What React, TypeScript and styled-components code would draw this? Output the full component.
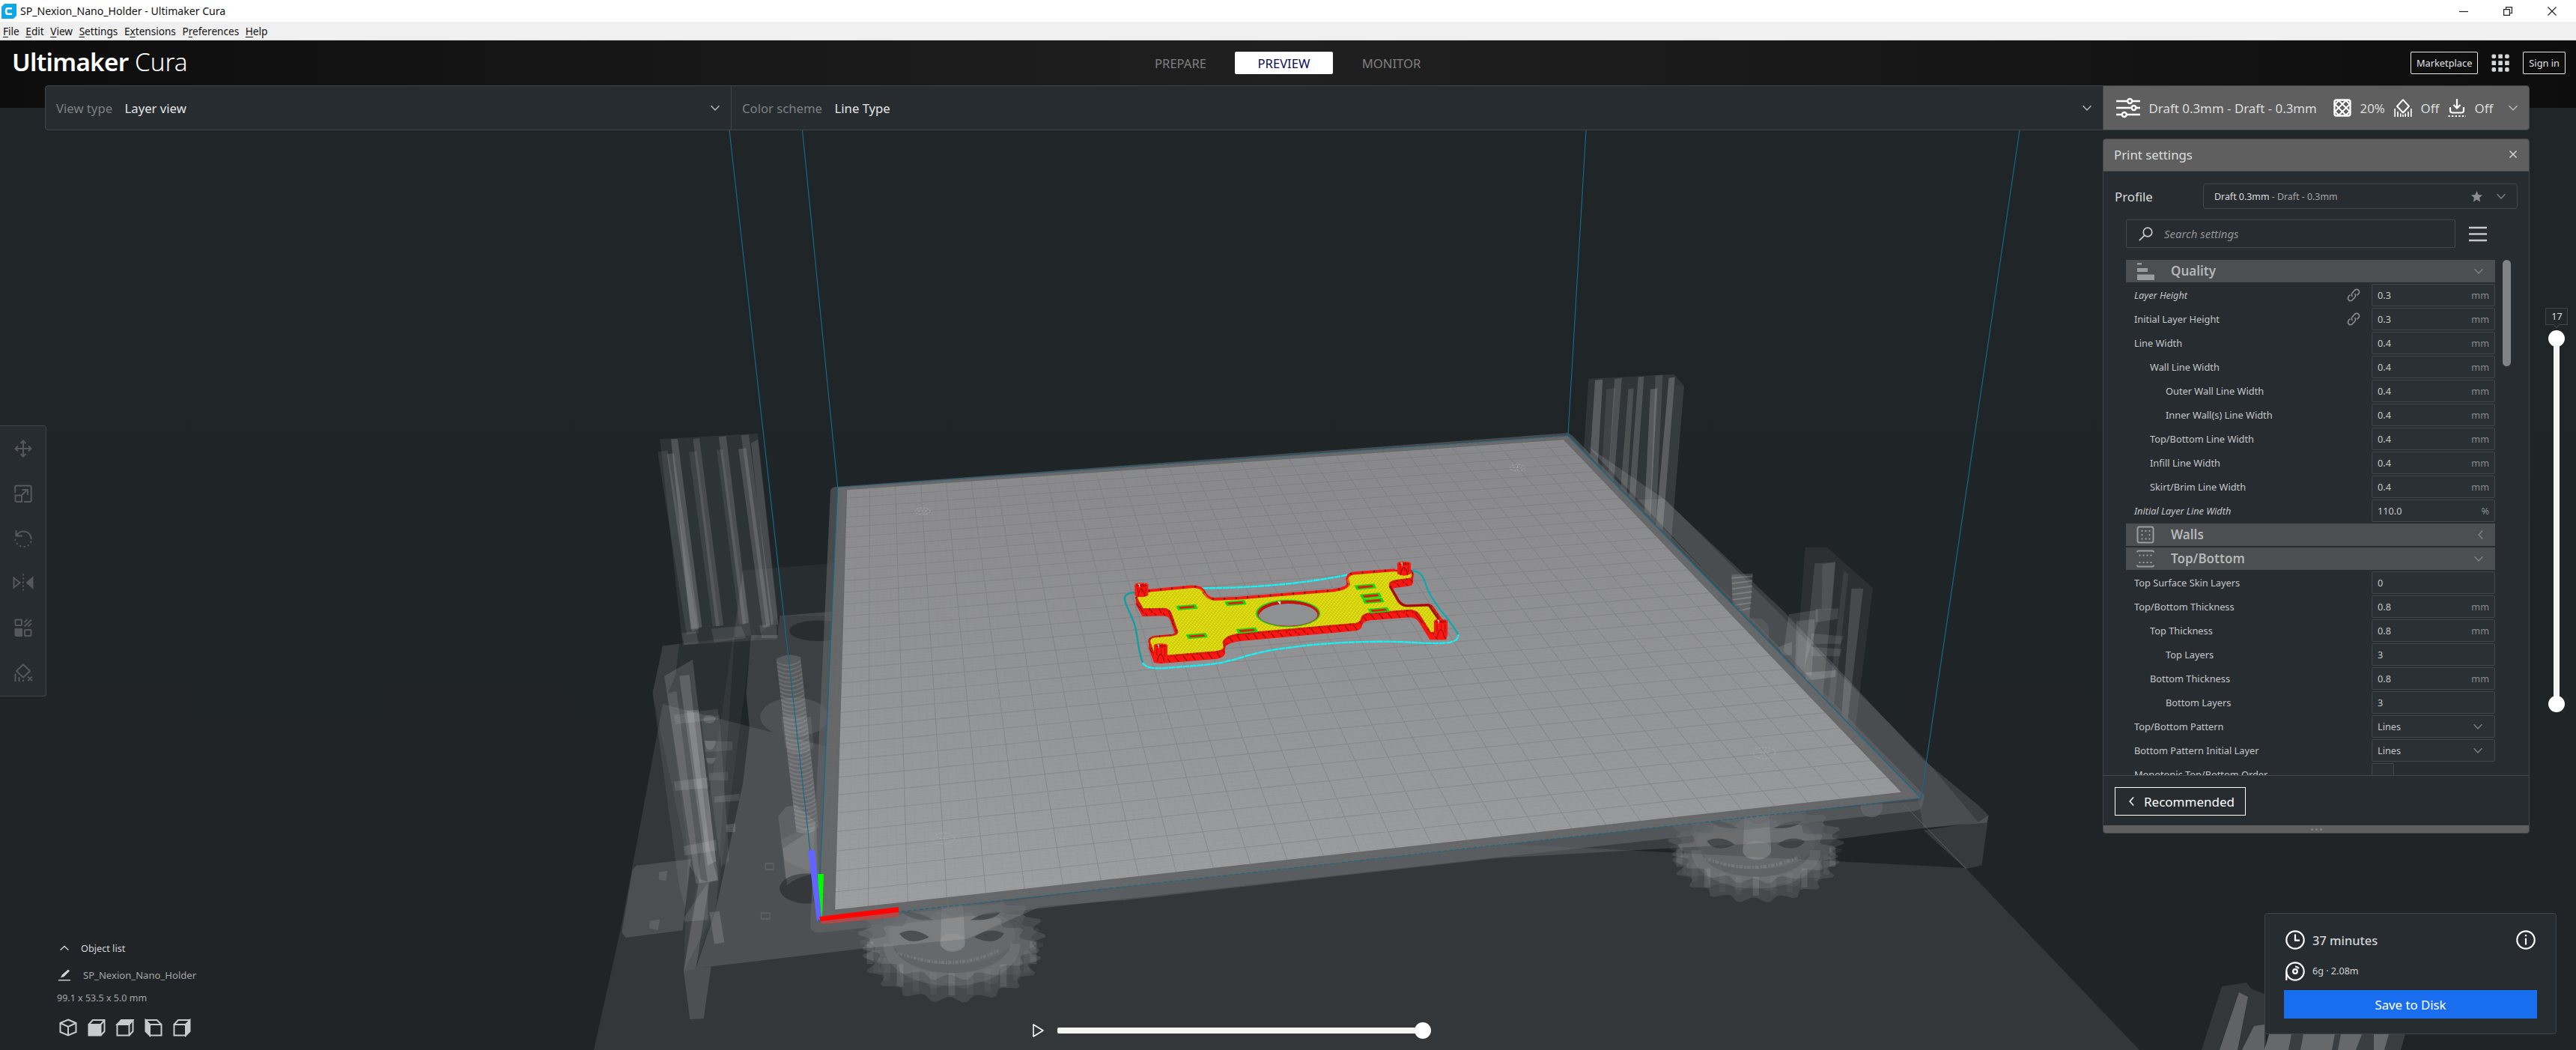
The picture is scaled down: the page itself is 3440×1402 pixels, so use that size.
import React from "react";
import styled, { createGlobalStyle, css } from "styled-components";

const GlobalStyle = createGlobalStyle`
  * { box-sizing: border-box; }
  html, body { margin: 0; padding: 0; overflow: hidden; background: #1f2427; }
  body { font-family: "Noto Sans", "Open Sans", sans-serif; color: #d6d8d9; }
`;

/* ---------- window chrome ---------- */

const Window = styled.div`
  width: 3440px;
  height: 1402px;
  display: flex;
  flex-direction: column;
  position: relative;
  isolation: isolate;
  overflow: hidden;
`;

const TitleBar = styled.div`
  height: 29px;
  flex: none;
  background: #fff;
  color: #111;
  display: flex;
  align-items: center;
  padding-left: 2px;
  font-size: 14.1px;
`;

const TitleText = styled.span`
  margin-left: 5px;
  flex: 1;
`;

const WindowButtons = styled.div`
  display: flex;
  width: 178px;
  margin-right: 2px;
  justify-content: space-around;
  align-items: center;
`;

const MenuBar = styled.div`
  height: 25px;
  flex: none;
  background: #f0f0f0;
  border-bottom: 1px solid #d4d4d4;
  color: #111;
  display: flex;
  align-items: center;
  gap: 8.6px;
  padding-left: 4px;
  font-size: 13.6px;

  u { text-underline-offset: 2px; }
`;

const Header = styled.header`
  height: 90px;
  flex: none;
  padding-bottom: 30px;
  display: grid;
  grid-template-columns: 1fr auto 1fr;
  align-items: center;
  background: linear-gradient(90deg, #0d0d0d 0%, #202020 50%, #0d0d0d 100%);
`;

const Logo = styled.div`
  padding-left: 16px;
  font-size: 33.2px;
  line-height: 40px;
  font-weight: 300;
  color: #fff;
  margin-top: -2px;

  b { font-weight: 600; letter-spacing: -0.7px; }
`;

const Tabs = styled.nav`
  display: flex;
  gap: 7px;
`;

const Tab = styled.div<{ $width: number; $active?: boolean }>`
  height: 30px;
  width: ${(p) => p.$width}px;
  display: flex;
  align-items: center;
  justify-content: center;
  font-size: 16.6px;
  border-radius: 2px;
  color: ${(p) => (p.$active ? "#0c0c54" : "#808080")};
  background: ${(p) => (p.$active ? "#fff" : "transparent")};
`;

const Account = styled.div`
  justify-self: end;
  display: flex;
  align-items: center;
  gap: 18px;
  padding-right: 14px;
`;

const OutlineButton = styled.div`
  height: 30px;
  padding: 0 7px;
  display: flex;
  align-items: center;
  border: 1px solid #e8e8e8;
  border-radius: 2px;
  font-size: 12.8px;
  color: #e0e2e3;
`;

/* ---------- stage menu ---------- */

const StageRow = styled.div`
  height: 60px;
  margin: -30px 62px 0 60px;
  flex: none;
  display: flex;
  border: 1px solid #3f4548;
  border-radius: 4px;
  overflow: hidden;
  background: #272c30;
`;

const StageSelect = styled.div<{ $width: number }>`
  width: ${(p) => p.$width}px;
  display: flex;
  align-items: center;
  padding: 0 15px 0 14px;
  font-size: 16.7px;
  color: #e4e5e6;
  border-right: 1px solid #3f4548;

  svg { margin-left: auto; }
`;

const Muted = styled.span`
  color: #7d8082;
  margin-right: 16.5px;
`;

const PrintBar = styled.div`
  flex: 1;
  display: flex;
  align-items: center;
  background: #5f5f5f;
  padding: 0 15px 0 17px;
  font-size: 16.9px;
  color: #dcdddd;
`;

const PrintBarText = styled.span<{ $width: number }>`
  width: ${(p) => p.$width}px;
  padding-left: 11.5px;
  white-space: nowrap;
`;

/* ---------- workspace ---------- */

const Workspace = styled.div`
  flex: 1;
  min-height: 0;
  display: flex;
  justify-content: space-between;
`;

const LeftColumn = styled.div`
  width: 400px;
  display: flex;
  flex-direction: column;
`;

const Toolbar = styled.div`
  margin-top: 394px;
  width: 62px;
  height: 362px;
  padding: 0 0 1px;
  display: flex;
  flex-direction: column;
  background: #272c30;
  border: 1px solid #3f4548;
  border-left: 0;
  border-radius: 0 4px 4px 0;
`;

const Tool = styled.div`
  flex: 1;
  display: flex;
  align-items: center;
  justify-content: center;
  color: #55595b;
`;

const ObjectInfo = styled.div`
  margin-top: auto;
  padding: 0 0 18px 76px;
`;

const InfoLine = styled.div<{ $height: number; $size: number; $gap?: number; $dim?: boolean }>`
  height: ${(p) => p.$height}px;
  display: flex;
  align-items: center;
  gap: ${(p) => p.$gap ?? 0}px;
  font-size: ${(p) => p.$size}px;
  color: ${(p) => (p.$dim ? "#a3a5a6" : "#d4d5d6")};
`;

const ViewButtons = styled.div`
  display: flex;
  gap: 14px;
  padding-left: 3px;
  margin-top: 16px;
  color: #c9cacb;
`;

const CenterColumn = styled.div`
  flex: 1;
  display: flex;
  flex-direction: column;
  justify-content: flex-end;
`;

const Player = styled.div`
  display: flex;
  align-items: center;
  height: 22px;
  margin: 0 0 15px 979px;
`;

const PathTrack = styled.div`
  width: 488px;
  height: 8px;
  margin-left: 17px;
  background: #f4f4f3;
  border-radius: 2px;
`;

const Knob = styled.div<{ $horizontal?: boolean }>`
  width: 22px;
  height: 22px;
  flex: none;
  border-radius: 50%;
  background: #fff;
  margin-left: ${(p) => (p.$horizontal ? -11 : 0)}px;
`;

const RightColumn = styled.div`
  width: 632px;
  display: flex;
  flex-direction: column;
`;

const RightTop = styled.div`
  display: flex;
  padding-top: 11px;
`;

/* ---------- settings panel ---------- */

const Panel = styled.section`
  width: 570px;
  height: 928px;
  border: 1px solid #3f4548;
  border-radius: 4px;
  overflow: hidden;
  background: #272c30;
  display: flex;
  flex-direction: column;
`;

const PanelHeader = styled.div`
  height: 43px;
  flex: none;
  display: flex;
  align-items: center;
  justify-content: space-between;
  padding: 0 16px 2px 14px;
  background: #5f5f5f;
  border-bottom: 1px solid #4a4f52;
  font-size: 16.8px;
  color: #dcdddd;
`;

const ProfileRow = styled.div`
  display: flex;
  align-items: center;
  justify-content: space-between;
  margin: 16px 15px 0 15px;
  font-size: 16.8px;
  color: #d8dadb;
`;

const ProfileSelect = styled.div`
  width: 420px;
  height: 34px;
  display: flex;
  align-items: center;
  padding: 0 15px 0 14px;
  border: 1px solid #43484b;
  border-radius: 4px;
  font-size: 12.4px;
  color: #dcdedf;

  em { font-style: normal; color: #a5a7a9; }
  svg:first-of-type { margin-left: auto; }
  svg + svg { margin-left: 19px; }
`;

const SearchRow = styled.div`
  display: flex;
  align-items: center;
  gap: 18px;
  margin: 14px 0 0 30px;
`;

const SearchBox = styled.div`
  width: 440px;
  height: 38px;
  display: flex;
  align-items: center;
  gap: 15px;
  padding-left: 16px;
  border: 1px solid #43484b;
  border-radius: 2px;
  font-size: 14.9px;
  font-style: italic;
  color: #929496;
`;

const ListArea = styled.div`
  height: 688px;
  flex: none;
  overflow: hidden;
  display: flex;
  gap: 10px;
  margin-top: 16px;
  padding-left: 30px;
`;

const Rows = styled.div`
  width: 493px;
  display: flex;
  flex-direction: column;
  gap: 2px;
`;

const ScrollThumb = styled.div`
  width: 11px;
  height: 142px;
  border-radius: 6px;
  background: #808486;
`;

const Category = styled.div`
  height: 30px;
  flex: none;
  display: flex;
  align-items: center;
  padding: 0 16px 0 14px;
  background: #4b4f51;
  color: #b4b7b8;
  font-size: 17px;
  font-weight: 600;

  svg:last-child { margin-left: auto; }
`;

const CategoryName = styled.span`
  margin-left: 22px;
  padding-bottom: 2px;
`;

const SettingRow = styled.div`
  height: 30px;
  flex: none;
  display: flex;
  align-items: center;
`;

const SettingLabel = styled.span<{ $depth: number; $italic?: boolean }>`
  flex: 1;
  padding-left: ${(p) => 11 + p.$depth * 21}px;
  font-size: ${(p) => (p.$italic ? 12.7 : 12.8)}px;
  color: #c4c7c9;
  white-space: nowrap;
  ${(p) => p.$italic && css`font-style: italic;`}
`;

const LinkSlot = styled.span`
  width: 18px;
  margin-right: 15px;
  display: flex;
`;

const Field = styled.div`
  width: 165px;
  height: 30px;
  display: flex;
  align-items: center;
  justify-content: space-between;
  padding: 0 7px;
  border: 1px solid #43484b;
  border-radius: 2px;
  background: #2b3034;
  font-size: 12.7px;
  color: #c4c7c9;

  svg { margin-right: 9px; }
`;

const Unit = styled.span`
  color: #888b8d;
`;

const CheckBox = styled.div`
  width: 30px;
  height: 30px;
  margin-right: 135px;
  border: 1px solid #43484b;
  border-radius: 2px;
  background: #2b3034;
`;

const PanelFooter = styled.div`
  flex: 1;
  border-top: 1px solid #43484b;
  padding: 15px 0 0 15px;
`;

const RecommendedButton = styled.div`
  width: 175px;
  height: 38px;
  border: 1px solid #fff;
  display: flex;
  align-items: center;
  gap: 13px;
  padding-left: 18px;
  color: #fff;
  font-size: 17px;
`;

const DragBar = styled.div`
  height: 10px;
  flex: none;
  display: flex;
  align-items: center;
  justify-content: center;
  gap: 3px;
  background: #5f5f5f;
`;

const DragDot = styled.i`
  width: 3px;
  height: 3px;
  border-radius: 50%;
  background: #808080;
`;

/* ---------- layer slider ---------- */

const LayerSlider = styled.div`
  width: 30px;
  margin: 226px 0 0 21px;
  display: flex;
  flex-direction: column;
  align-items: center;
`;

const LayerLabel = styled.div`
  width: 30px;
  height: 23px;
  border: 1px solid #3f4548;
  background: #23282b;
  font-size: 12.6px;
  display: flex;
  align-items: center;
  justify-content: center;
  padding-left: 1px;
  color: #dcdedf;
`;

const LayerPointer = styled.i`
  width: 6px;
  height: 6px;
  margin: -3px 0 4px;
  background: #23282b;
  border: solid #3f4548;
  border-width: 0 1px 1px 0;
  transform: rotate(45deg);
`;

const LayerTrack = styled.div`
  width: 8px;
  height: 470px;
  margin: -2px 0;
  background: #f4f4f3;
`;

/* ---------- job panel ---------- */

const JobPanel = styled.section`
  width: 390px;
  height: 162px;
  margin: auto 0 21px 216px;
  padding: 22px 25px 0;
  border: 1px solid #3f4548;
  border-radius: 4px;
  background: #272c30;
`;

const JobLine = styled.div<{ $big?: boolean }>`
  display: flex;
  align-items: center;
  gap: 10px;
  height: ${(p) => (p.$big ? 26 : 27)}px;
  margin: 0 2px ${(p) => (p.$big ? 15 : 12)}px 2px;
  font-size: ${(p) => (p.$big ? 16.4 : 12.6)}px;
  font-weight: ${(p) => (p.$big ? 500 : 400)};
  color: #d2d4d5;

  svg + span + svg { margin-left: auto; }
`;

const SaveButton = styled.div`
  height: 38px;
  background: #196ef0;
  color: #fff;
  display: flex;
  align-items: center;
  justify-content: center;
  font-size: 16.8px;
`;

/* ---------- icons ---------- */

type IconProps = { w?: number; h?: number; color?: string; sw?: number; box?: string; children?: React.ReactNode };

const Svg = styled.svg`
  flex: none;
  overflow: visible;
`;

const Icon = ({ w = 24, h = 24, color = "currentColor", sw = 2, box = "0 0 24 24", children }: IconProps) => (
  <Svg width={w} height={h} viewBox={box} fill="none" stroke={color} strokeWidth={sw}>
    {children}
  </Svg>
);

const Chevron = ({ dir = "down", color = "#b9bbbc" }: { dir?: "down" | "left"; color?: string }) => {
  if (dir === "left")
    return (
      <Icon w={7} h={12} box="0 0 7 12" sw={1.5} color={color}>
        <path d="M6.2 .6 1.2 6l5 5.4" />
      </Icon>
    );
  return (
    <Icon w={12} h={8} box="0 0 12 8" sw={1.4} color={color}>
      <path d="M.6 1.2 6 7l5.4-5.8" />
    </Icon>
  );
};

const SlidersIcon = () => (
  <Icon w={32} h={26} box="0 0 32 26" color="#fff" sw={2.4}>
    <path d="M0 4h14.5M22 4h10M0 13h19.500M27 13h5M0 22h7M14.500 22H32" />
    <circle cx="18.200" cy="4" r="3" />
    <circle cx="23.500" cy="13" r="3" />
    <circle cx="10.800" cy="22" r="3" />
  </Icon>
);

const InfillIcon = () => (
  <Icon color="#fff" sw={2.4}>
    <rect x="1.500" y="1.500" width="21" height="21" rx="2.500" />
    <path d="M2 7.500 7.500 2M2 17 17 2M7 22 22 7M16.500 22l5.500-5.500M2 16.500 7.500 22M2 7l15 15M7 2l15 15M16.500 2 22 7.500" strokeWidth="2" />
  </Icon>
);

const SupportIcon = () => (
  <Icon color="#fff" sw={2}>
    <path d="M12 1.200 20 10l-8 8.500L4 10z" strokeLinejoin="round" />
    <path d="M1.200 13v11M5 17v7M8.800 19.500V24M15.200 19.500V24M19 17v7M22.800 13v11M12 21v3" strokeWidth="1.700" />
  </Icon>
);

const AdhesionIcon = () => (
  <Icon color="#fff" sw={2.2}>
    <path d="M12 0v12M7.500 8l4.500 4.500L16.500 8M3 11v4.500q0 3 3 3h12q3 0 3-3V11" />
    <path d="M.5 23H24" strokeDasharray="2.300 2.300" />
  </Icon>
);

const GridIcon = () => (
  <Icon color="none">
    {[0, 1, 2].map((r) =>
      [0, 1, 2].map((c) => (
        <rect key={`${r}${c}`} x={0.5 + c * 8.8} y={0.5 + r * 8.8} width="5.600" height="5.600" rx={r !== 1 && c !== 1 ? 1.8 : 0.4} fill="#d5d6d7" />
      ))
    )}
  </Icon>
);

const LinkIcon = () => (
  <Icon w={18} h={18} color="#86898b">
    <path d="M10 14.500a4.800 4.800 0 0 1 0-6.800l4.300-4.400a4.500 4.500 0 0 1 6.400 6.400L18 12.400M14 9.500a4.800 4.800 0 0 1 0 6.800l-4.300 4.400a4.500 4.500 0 0 1-6.400-6.400L6 11.600" strokeWidth="2.300" />
  </Icon>
);

const toolIcons: React.ReactNode[] = [
  <path d="M12 2v20M2 12h20M8.500 5 12 1.500 15.500 5M8.500 19l3.500 3.500 3.500-3.500M5 8.500 1.500 12 5 15.500M19 8.500l3.500 3.500-3.500 3.500" />,
  <>
    <path d="M1.200 11V3.500q0-2 2-2h17.500q2 0 2 2v17.500q0 2-2 2H13M9 15 17.500 7M10.500 7h7.500v7" />
    <path d="M1.500 14.500H10V23H3.500q-2 0-2-2z" />
  </>,
  <>
    <path d="M2.500 1v7.500h8.500M3 8.300C8-1 22 1 22.700 13" />
    <path d="M22.500 15.500C20 26 4 26 1 13" strokeDasharray="2.200 3.400" />
  </>,
  <>
    <path d="M-.5 5.500v13L7.500 12z" />
    <path d="M12 .5v23" strokeDasharray="2 3" />
    <path d="M24.500 5.500v13L17 12z" fill="currentColor" />
  </>,
  <>
    <rect x="1.500" y="1.500" width="8.500" height="7.500" rx="1" />
    <path d="M1.500 14H10v9H3.500q-2 0-2-2z" fill="currentColor" />
    <rect x="14" y="15" width="8.500" height="8" rx="1" />
    <path d="m13.500 5 4-4M13.500 10.500 23 1.500M18.500 10.500l4.500-4" />
  </>,
  <>
    <path d="M12 1.200 21 10l-9 8.500L3 10z" strokeLinejoin="round" />
    <path d="M1.500 13.500V24M6.500 18v6M12 21.500V24M18 17.500l6 5.500M24 17.500 18 23" />
  </>,
];

const cubeIcons: React.ReactNode[] = [
  <path d="M12 1.500 22.500 6v12L12 22.500 1.500 18V6zM1.500 6 12 11l10.500-5M12 11v11.500" />,
  <>
    <path d="M1.500 8h16v14.500h-16z" fill="currentColor" />
    <path d="M1.500 8 7 2h15.500v15l-5 5.500M17.500 8l5-6" />
  </>,
  <>
    <path d="M1.500 8 7 2h15.500l-5 6z" fill="currentColor" />
    <path d="M1.500 8h16v14.500h-16zM22.500 2v15l-5 5.500" />
  </>,
  <>
    <path d="M1.500 2 7 8v14.500L1.500 17z" fill="currentColor" />
    <path d="M1.500 2h15L22.500 8v14.500H7V8h15.500" />
  </>,
  <>
    <path d="M17 8l5.500-6v15L17 22.500z" fill="currentColor" />
    <path d="M1.500 8H17v14.500H1.500zL7 2h15.500" />
  </>,
];

/* ---------- 3D scene ---------- */

type Pt = [number, number];

/* Perspective map from the unit square onto a quad (origin, +x, +x+y, +y). */
const makeProjection = (p0: Pt, p1: Pt, p2: Pt, p3: Pt) => {
  const dx1 = p1[0] - p2[0], dy1 = p1[1] - p2[1];
  const dx2 = p3[0] - p2[0], dy2 = p3[1] - p2[1];
  const sx = p0[0] - p1[0] + p2[0] - p3[0];
  const sy = p0[1] - p1[1] + p2[1] - p3[1];
  const den = dx1 * dy2 - dx2 * dy1;
  const g = (sx * dy2 - dx2 * sy) / den;
  const h = (dx1 * sy - sx * dy1) / den;
  return (u: number, v: number): Pt => {
    const w = g * u + h * v + 1;
    return [
      ((p1[0] - p0[0] + g * p1[0]) * u + (p3[0] - p0[0] + h * p3[0]) * v + p0[0]) / w,
      ((p1[1] - p0[1] + g * p1[1]) * u + (p3[1] - p0[1] + h * p3[1]) * v + p0[1]) / w,
    ];
  };
};

const project = makeProjection([1092.4, 1229.5], [2565.3, 1065.6], [2093.9, 581.7], [1118.7, 650.7]);

const gridPath = (step: number) => {
  const size = 305;
  const parts: string[] = [];
  const f = (p: Pt) => `${p[0].toFixed(1)} ${p[1].toFixed(1)}`;
  for (let t = 2.5; t < size; t += step) {
    const k = t / size;
    parts.push(`M${f(project(k, 0))}L${f(project(k, 1))}M${f(project(0, k))}L${f(project(1, k))}`);
  }
  return parts.join("");
};

const gearPath = (cx: number, cy: number, rx: number, ry: number, teeth: number) => {
  const pts: string[] = [];
  const n = teeth * 6;
  for (let i = 0; i < n; i++) {
    const a = (i / n) * Math.PI * 2;
    const k = [1, 1, 0.93, 0.88, 0.88, 0.93][i % 6];
    pts.push(`${(cx + Math.cos(a) * rx * k).toFixed(1)},${(cy + Math.sin(a) * ry * k).toFixed(1)}`);
  }
  return `M${pts.join("L")}Z`;
};

const Gear = ({ cx, cy, rx, ry, depth }: { cx: number; cy: number; rx: number; ry: number; depth: number }) => (
  <g fill="#fff">
    <path d={gearPath(cx, cy, rx, ry, 18)} opacity=".1" />
    <path d={gearPath(cx, cy + depth * 0.4, rx * 0.98, ry, 18)} opacity=".05" />
    <path d={gearPath(cx, cy + depth, rx * 0.95, ry, 18)} opacity=".09" />
    <ellipse cx={cx} cy={cy} rx={rx * 0.68} ry={ry * 0.66} opacity=".04" />
    <path
      d={`M${cx - rx * 0.68} ${cy + 6}A${rx * 0.68} ${ry * 0.78} 0 0 0 ${cx + rx * 0.68} ${cy + 6}`}
      transform={`translate(0 ${depth * 0.3})`}
      fill="none"
      stroke="#fff"
      strokeWidth={ry * 0.28}
      opacity=".08"
    />
    {[-1, 1].map((side) => (
      <g key={side} fill="#2f3335" opacity=".6">
        <path d={`M${cx + side * rx * 0.24} ${cy + 6}q${side * rx * 0.16} ${-ry * 0.24} ${side * rx * 0.32} ${-ry * 0.08}q${-side * rx * 0.1} ${ry * 0.3} ${-side * rx * 0.32} ${ry * 0.08}z`} />
        <path d={`M${cx + side * rx * 0.2} ${cy - ry * 0.32}q${side * rx * 0.16} ${-ry * 0.2} ${side * rx * 0.32} ${-ry * 0.18}q${-side * rx * 0.06} ${ry * 0.2} ${-side * rx * 0.32} ${ry * 0.18}z`} />
      </g>
    ))}
    {Array.from({ length: 13 }, (_, i) => {
      const a = (0.08 + (i / 12) * 0.84) * Math.PI;
      const x = cx + Math.cos(a) * rx * 0.9;
      const y = cy + Math.sin(a) * ry * 0.92;
      return <rect key={i} x={x - rx * 0.035} y={y - 8} width={rx * 0.07} height={depth} opacity={i % 3 ? 0.04 : 0.1} />;
    })}
    <path d={`M${cx - 28} ${cy - 90}h60l8 110a37 20 0 0 1-74 0z`} opacity=".12" />
    <ellipse cx={cx + 2} cy={cy + 18} rx="38" ry="20" opacity=".07" />
    <path d={`M${cx - rx * 0.58} ${cy + ry * 0.4}Q${cx} ${cy + ry * 0.85} ${cx + rx * 0.5} ${cy + ry * 0.35}`} fill="none" stroke="#fff" strokeWidth="7" strokeDasharray="4 3 9 5" opacity=".1" />
  </g>
);

const Quads = ({ items }: { items: [string, number][] }) => (
  <>
    {items.map(([points, o], i) => (
      <polygon key={i} points={points} fill="#fff" opacity={o} />
    ))}
  </>
);

const leftParts: [string, number][] = [
  ["430,455 705,438 700,560 540,560 455,620 350,1240 285,1380 253,1385", 0.045],
  ["190,630 455,605 430,455 405,610 350,1240 253,1385 265,1130 160,740", 0.05],
  ["540,560 700,550 660,1270 800,1262 1568,1190 1568,1220 1320,1235 1100,1310 785,1333 290,1378 350,1240 430,950 450,820 440,740 455,605 535,605", 0.13],
  ["253,1385 272,1497 313,1495 335,1375 290,1378 330,1180 300,1170", 0.13],
  ["182,150 475,137 538,582 534,614 250,628", 0.07],
  ["175,180 205,176 298,600 262,604", 0.08],
  ["203,185 224,183 300,590 278,596", 0.13],
  ["215,150 235,150 308,586 274,592", 0.16],
  ["269,180 292,178 360,583 340,585", 0.08],
  ["281,150 300,148 372,582 350,585", 0.12],
  ["352,176 370,174 440,578 420,580", 0.08],
  ["358,145 380,143 448,576 430,580", 0.14],
  ["417,173 440,171 512,585 490,588", 0.14],
  ["425,141 448,140 522,580 500,583", 0.12],
  ["455,160 475,150 536,580 515,582", 0.12],
  ["247,600 290,596 298,624 255,628", 0.1],
  ["335,590 425,584 440,612 345,622", 0.09],
  ["480,582 530,580 532,612 486,612", 0.1],
  ["160,740 190,630 240,625 228,700 205,740 270,1140 258,1240 240,1190", 0.07],
  ["195,700 280,662 357,1175 290,1182", 0.13],
  ["205,740 232,735 305,1180 270,1140", 0.1],
  ["240,700 270,697 330,1100 355,1172 325,1180", 0.14],
  ["262,780 298,778 350,1130 325,1140", 0.16],
  ["224,790 355,776 358,800 228,812", 0.09],
  ["224,945 325,935 327,960 228,966", 0.11],
  ["252,1095 350,1080 352,1105 256,1117", 0.11],
  ["305,800 360,790 390,1130 365,1142", 0.08],
  ["318,850 400,852 398,872 318,876", 0.08],
  ["328,925 386,922 386,942 328,942", 0.08],
  ["345,980 420,973 420,989 345,994", 0.11],
  ["380,1045 408,1042 408,1062 382,1062", 0.14],
  ["100,1150 112,1140 275,1125 250,1290 80,1307 68,1295", 0.12],
  ["180,1155 205,1152 200,1176 178,1172", 0.1],
  ["152,1268 182,1265 176,1290 150,1285", 0.1],
  ["253,1262 325,1180 326,1266 255,1270", 0.1],
  ["330,1248 360,1246 375,1318 345,1322", 0.14],
  ["536,1025 560,1003 590,1000 650,1040 660,1180 560,1182", 0.1],
  ["545,1080 650,1040 655,1160 555,1130", 0.06],
];

const rightParts: [string, number][] = [
  ["235,240 435,356 745,600 1115,930 1258,1030 1285,1052 1280,1068 1115,1080 900,1103 0,1146 -980,1239 -980,1180 0,1100 1110,1020", 0.12],
  ["438,356 1115,925 1258,1067 1115,1080 1100,1015 360,358", 0.08],
  ["1258,1067 1285,1052 1267,1162 1225,1170 1115,1085", 0.1],
  ["238,92 462,82 488,108 452,470 225,250", 0.08],
  ["255,95 275,93 262,280 242,262", 0.19],
  ["285,115 308,112 290,310 272,295", 0.08],
  ["306,92 325,90 304,320 290,305", 0.14],
  ["342,115 356,113 338,345 322,332", 0.13],
  ["368,88 383,87 360,360 344,352", 0.15],
  ["400,115 418,113 400,395 384,385", 0.18],
  ["413,85 432,83 414,410 398,398", 0.11],
  ["448,90 464,88 432,425 414,415", 0.2],
  ["462,105 488,108 455,450 432,428", 0.03],
  ["805,463 862,463 982,552 935,865 780,740", 0.06],
  ["830,498 884,495 850,800 800,745", 0.1],
  ["850,500 884,495 875,600 848,598", 0.08],
  ["906,514 918,522 880,810 865,800", 0.07],
  ["926,553 957,553 915,850 900,830", 0.13],
  ["762,610 838,600 838,625 800,735 748,690", 0.11],
  ["782,625 830,620 822,745 778,735", 0.12],
  ["832,598 892,597 890,620 832,628", 0.1],
  ["820,652 905,658 898,675 822,675", 0.1],
  ["822,682 900,686 896,702 822,702", 0.1],
  ["806,738 885,733 884,748 806,756", 0.16],
  ["612,522 668,520 658,625 615,590", 0.13],
  ["735,682 770,670 770,700 745,700", 0.12],
];

const screwRibs = Array.from({ length: 40 }, (_, i) => {
  const t = i / 40;
  const x = 531 + t * 59;
  const y = 668 + t * 390;
  return `M${x} ${y}q36 16 ${72 - t * 5} -3`;
}).join("");

const modelTop =
  "M112 205Q118 190 165 178L330 163Q365 160 378 176Q392 208 425 213L520 209L900 178Q955 172 964 152L956 130Q956 112 985 109L1150 96L1212 96Q1226 110 1214 128L1150 137Q1122 142 1130 157L1165 217Q1180 238 1205 236L1282 232Q1296 236 1302 246L1356 325L1352 345L1290 345L1248 278Q1236 258 1212 255L1050 267Q1015 272 1015 290Q1012 306 990 309L530 350Q472 357 462 382L466 402Q462 418 430 422L210 440L185 437L164 380Q164 362 190 360L258 354Q282 348 274 335L252 272Q246 252 225 249L138 251Z";

const backEdge =
  "M120 196L165 176L330 160Q365 158 380 174Q395 208 425 210L520 206L900 175Q955 168 962 150L958 128Q960 108 985 106L1150 93";

const pockets: Pt[] = [[315, 242], [510, 225], [355, 357], [1030, 160], [1052, 196], [1062, 216], [1084, 254], [556, 335]];

const Tower = ({ x, y, h }: { x: number; y: number; h: number }) => (
  <g>
    <path d={`M${x - 27} ${y}v${h}q27 14 54 0v-${h}z`} fill="#fb1712" />
    <path d={`M${x - 15} ${y + 8}v${h * 0.5}M${x + 2} ${y + 12}v${h * 0.4}M${x + 17} ${y + 8}v${h * 0.6}`} stroke="#a30b08" strokeWidth="2.500" />
    <path d={`M${x - 14} ${y + h + 4}q4-26 13-30q11 4 15 30`} fill="none" stroke="#5c0403" strokeWidth="2.500" />
    <ellipse cx={x} cy={y} rx="26" ry="8" fill="#c20f0b" stroke="#fb1712" strokeWidth="4" />
    <path d={`M${x - 24} ${y}a24 7 0 0 1 48 0`} fill="none" stroke="#d8d010" strokeWidth="2" strokeDasharray="3 9" />
    <path d={`M${x - 13} ${y - 3}l7-2M${x - 8} ${y - 3}v10`} stroke="#fff" strokeWidth="3" />
  </g>
);

const PrintedModel = () => (
  <g transform="translate(1480 730) scale(.3333)">
    <g fill="none" stroke="#14f4f8" strokeWidth="7">
      <path d="M105 183Q60 188 66 212C70 240 92 270 105 310C120 360 115 400 138 465" stroke="#0f9fa3" />
      <path d="M138 465C150 488 190 490 240 485C320 478 400 475 460 463C540 445 590 420 720 405C850 385 1000 380 1130 380C1220 382 1320 392 1370 383Q1405 375 1402 352" strokeDasharray="26 2" />
      <path d="M1402 352C1370 290 1300 230 1275 160C1262 110 1245 95 1212 97" stroke="#0fa9ad" />
      <path d="M375 166C600 165 800 145 960 112" strokeDasharray="26 2" />
    </g>
    {[26, 22, 16, 10, 5].map((dy) => (
      <path key={dy} d={modelTop} transform={`translate(0 ${dy})`} fill="#fb1712" stroke="#fb1712" strokeWidth="4" />
    ))}
    <path d={modelTop} transform="translate(0 26)" fill="url(#wallLines)" />
    <path d="M240 252L272 335Q280 352 262 358L190 364" transform="translate(6 10)" fill="none" stroke="#8d0b09" strokeWidth="10" />
    <path d={modelTop} fill="#e8e510" stroke="#e01310" strokeWidth="8" strokeLinejoin="round" />
    <path d={modelTop} fill="url(#infill)" stroke="#5d1a06" strokeWidth="7" strokeDasharray="3 38" />
    <path d={backEdge} fill="none" stroke="#fb1712" strokeWidth="11" />
    <path d={backEdge} fill="none" stroke="#2d1405" strokeWidth="8" strokeDasharray="4 42" />
    <path d={backEdge} transform="translate(2 7)" fill="none" stroke="#bdf010" strokeWidth="2" />
    <path d="M1128 158L1163 219Q1180 240 1205 237L1284 234L1330 300" fill="none" stroke="#a30d0a" strokeWidth="9" />
    {pockets.map(([x, y]) => (
      <g key={`${x}-${y}`}>
        <path d={`M${x - 44} ${y - 5}l79-7l9 18l-79 7z`} fill="#12d812" />
        <path d={`M${x - 32} ${y - 1}l59-5l5 8l-59 5z`} fill="#f01410" />
      </g>
    ))}
    <ellipse cx="720" cy="267" rx="130" ry="55" fill="#16d916" />
    <ellipse cx="721" cy="268" rx="124" ry="51" fill="#d91612" />
    <ellipse cx="720" cy="272" rx="118" ry="45" fill="#8f9092" />
    <path d="M602 276Q600 222 720 216Q830 218 842 272Q820 228 720 228Q620 232 602 276" fill="#c8120f" />
    <path d="M680 220l10 8M688 220v10" stroke="#fff" strokeWidth="4" />
    <Tower x={133} y={155} h={40} />
    <Tower x={1185} y={69} h={40} />
    <Tower x={210} y={398} h={58} />
    <Tower x={1332} y={300} h={58} />
  </g>
);

const SceneSvg = styled.svg`
  position: absolute;
  inset: 0;
  z-index: -1;
`;

const plate = "1131.2,654.2 2087.8,587.2 2538.8,1057.7 1115.2,1214.5";

const Scene = () => (
  <SceneSvg width="3440" height="1402" viewBox="0 0 3440 1402">
    <defs>
      <linearGradient id="bg" x1="0" y1="0" x2="0" y2="1">
        <stop offset="0" stopColor="#202528" />
        <stop offset=".5" stopColor="#1f2427" />
        <stop offset="1" stopColor="#202427" />
      </linearGradient>
      <linearGradient id="plateFill" x1="0" y1="0" x2="0" y2="1">
        <stop offset="0" stopColor="#89898b" />
        <stop offset="1" stopColor="#9d9e9f" />
      </linearGradient>
      <pattern id="wallLines" width="36" height="40" patternUnits="userSpaceOnUse">
        <path d="M4 0L34 40" stroke="#6d0705" strokeWidth="3" />
      </pattern>
      <pattern id="infill" width="11" height="8" patternUnits="userSpaceOnUse" patternTransform="rotate(38)">
        <path d="M0 1h11" stroke="#a5a30a" strokeWidth="1.200" />
        <path d="M2 5h2.500" stroke="#3b3a05" strokeWidth="1.800" />
      </pattern>
      <clipPath id="plateClip"><polygon points={plate} /></clipPath>
      <clipPath id="volumeClip"><polygon points="1118.7,650.7 2093.9,581.7 2565.3,1065.6 1092.4,1229.5" /></clipPath>
    </defs>
    <rect width="3440" height="1402" fill="url(#bg)" />
    <polygon points="885,940 830,1235 793,1402 2857,1402 2625,1159 1500,1100" fill="#33373a" />

    <g transform="translate(800 500) scale(.4464 .5753)">
      <Quads items={leftParts} />
      <ellipse cx="655" cy="595" rx="86" ry="24" fill="#292d30" />
      <ellipse cx="585" cy="795" rx="103" ry="45" fill="#fff" opacity=".09" />
      <path d="M545 795l12 70q38 30 85 0l-8-70z" fill="#fff" opacity=".08" />
      <ellipse cx="622" cy="1193" rx="82" ry="35" fill="#34383b" />
      <path d="M550 1100l12 85q40-24 90-25l-2-110z" fill="#fff" opacity=".1" />
      <path d="M530 660q36-16 73-4l54 395q-30 22-67 10z" fill="#fff" opacity=".14" />
      <path d={screwRibs} fill="none" stroke="#fff" strokeWidth="4" opacity=".11" />
      <path d="M498 1135h24v14h-24zM485 1250h26v14h-26z" fill="none" stroke="#fff" strokeWidth="3" opacity=".1" />
      <path d="M312 800a18 10 0 1 0 36 0a18 10 0 1 0-36 0M315 850a16 20 0 1 0 34 0M320 890a14 14 0 1 0 28 0" fill="#fff" opacity=".13" />
      <Gear cx={1055} cy={1300} rx={280} ry={106} depth={52} />
    </g>
    <g transform="translate(2000 450) scale(.5102 .6071)">
      <Quads items={rightParts} />
      <path d="M612 530l55-4M613 542l54-6M614 554l53-6M614 566l52-6M615 578l50-6M620 590l44-6M632 602l30-6" stroke="#fff" strokeWidth="3" opacity=".18" />
      <path d="M650 620q50-8 60 20v35z" fill="#fff" opacity=".07" />
      <path d="M950 1035a27 20 0 0 0 57 0v-12h-57z" fill="#fff" opacity=".14" />
      <path d="M1060 1025L1225 1168" stroke="#777" strokeWidth="1" />
      <Gear cx={676} cy={1110} rx={230} ry={92} depth={42} />
    </g>
    <g fill="#fff">
      <path d="M2967 1317l33-5 6 8 20 8v74h-86z" opacity=".09" />
      <path d="M2990 1325l12 6-14 71h-24zM3010 1370l14-2v34h-30z" opacity=".22" />
      <path d="M3030 1381h30l-4 21h-32zM3076 1381h42l-4 21h-42zM3126 1381h28l-8 21h-24zM3170 1381h20l-6 21h-14z" opacity=".22" />
      <path d="M3030 1381h182l-6 21h-182z" opacity=".12" />
    </g>

    {/* bed carriage and build plate */}
    <path d="M1109 656Q1109 651 1116 650L2094 578L2100 582L2570 1062L2567 1077Q2564 1082 2555 1083L1098 1245Q1083 1247 1082 1236Z" fill="#66696b" opacity=".55" />
    <polygon points="1118.700,650.700 2093.900,581.700 2565.300,1065.600 1092.400,1229.500" fill="#666768" />
    <polygon points={plate} fill="url(#plateFill)" />
    <g clipPath="url(#plateClip)">
      <path d={gridPath(2.5)} stroke="#7d7e80" strokeWidth=".5" opacity=".14" fill="none" />
    </g>
    <g clipPath="url(#volumeClip)">
      <path d={gridPath(10)} stroke="#707173" strokeWidth="1.100" opacity=".36" fill="none" />
    </g>
    {[[1232, 682.5], [2026.5, 624.5], [1260.5, 1119.5], [2356, 1005.5]].map(([x, y], i) => (
      <g key={i} fill="none" stroke="#b0b1b2" strokeWidth=".9" strokeDasharray="3 1.500" opacity=".75">
        <ellipse cx={x} cy={y} rx={i < 2 ? 10 : 14.5} ry={i < 2 ? 4.5 : 7.5} />
        <path d={`M${x - 6} ${y}h12M${x} ${y - 3}v6`} />
      </g>
    ))}

    {/* build volume edges */}
    <g stroke="#17688a" strokeWidth="1.200" fill="none">
      <path d="M974 174L1092.400 1229.500M1071.500 174L1118.700 650.700L1092.400 1229.500M2118 174L2093.900 581.700L2565.300 1065.600L2697 174" />
      <path d="M1118.700 650.700L2093.900 581.700M1092.400 1229.500L2565.300 1065.600" strokeDasharray="5 3" />
    </g>
    <path d="M1095 1229L1200 1217v7L1098 1234z" fill="#b04a48" />
    <path d="M1092 1167h8l-2 60h-5z" fill="#00fa00" />
    <path d="M1079 1135.500l9-.5 9 88-6 8z" fill="#6264ff" />
    <path d="M1094 1224L1200 1211v7L1096 1230z" fill="#ff0404" />
    <PrintedModel />
  </SceneSvg>
);

/* ---------- settings data ---------- */

type Setting = { label: string; value?: string; unit?: string; depth?: number; italic?: boolean; linked?: boolean; kind?: "select" | "check" };

const quality: Setting[] = [
  { label: "Layer Height", value: "0.3", unit: "mm", italic: true, linked: true },
  { label: "Initial Layer Height", value: "0.3", unit: "mm", linked: true },
  { label: "Line Width", value: "0.4", unit: "mm" },
  { label: "Wall Line Width", value: "0.4", unit: "mm", depth: 1 },
  { label: "Outer Wall Line Width", value: "0.4", unit: "mm", depth: 2 },
  { label: "Inner Wall(s) Line Width", value: "0.4", unit: "mm", depth: 2 },
  { label: "Top/Bottom Line Width", value: "0.4", unit: "mm", depth: 1 },
  { label: "Infill Line Width", value: "0.4", unit: "mm", depth: 1 },
  { label: "Skirt/Brim Line Width", value: "0.4", unit: "mm", depth: 1 },
  { label: "Initial Layer Line Width", value: "110.0", unit: "%", italic: true },
];

const topBottom: Setting[] = [
  { label: "Top Surface Skin Layers", value: "0" },
  { label: "Top/Bottom Thickness", value: "0.8", unit: "mm" },
  { label: "Top Thickness", value: "0.8", unit: "mm", depth: 1 },
  { label: "Top Layers", value: "3", depth: 2 },
  { label: "Bottom Thickness", value: "0.8", unit: "mm", depth: 1 },
  { label: "Bottom Layers", value: "3", depth: 2 },
  { label: "Top/Bottom Pattern", value: "Lines", kind: "select" },
  { label: "Bottom Pattern Initial Layer", value: "Lines", kind: "select" },
  { label: "Monotonic Top/Bottom Order", kind: "check" },
];

const SettingItem = ({ s }: { s: Setting }) => (
  <SettingRow>
    <SettingLabel $depth={s.depth ?? 0} $italic={s.italic}>{s.label}</SettingLabel>
    {s.linked && <LinkSlot><LinkIcon /></LinkSlot>}
    {s.kind === "check" ? (
      <CheckBox />
    ) : (
      <Field>
        <span>{s.value}</span>
        {s.unit && <Unit>{s.unit}</Unit>}
        {s.kind === "select" && <Chevron color="#808385" />}
      </Field>
    )}
  </SettingRow>
);

const menus: [string, string, string][] = [
  ["", "F", "ile"],
  ["", "E", "dit"],
  ["", "V", "iew"],
  ["", "S", "ettings"],
  ["E", "x", "tensions"],
  ["P", "r", "eferences"],
  ["", "H", "elp"],
];

export default function App() {
  return (
    <Window>
      <GlobalStyle />
      <Scene />
      <TitleBar>
        <Icon w={20} h={20} box="0 0 20 20" color="none">
          <path d="M4 0h16v16l-4 4H0V4z" fill="#0fa8e6" />
          <path d="M14 6.300H8.500Q6 6.300 6 10t2.500 3.700H14" stroke="#fff" strokeWidth="2.600" />
        </Icon>
        <TitleText>SP_Nexion_Nano_Holder - Ultimaker Cura</TitleText>
        <WindowButtons>
          <Icon w={12} h={12} box="0 0 12 12" color="#222" sw={1.2}><path d="M0 6.500h12" /></Icon>
          <Icon w={12} h={12} box="0 0 12 12" color="#222" sw={1.2}><path d="M.6 3.600h7.800v7.800H.6zM3.500 3.500V.6h7.900v7.900H8.500" /></Icon>
          <Icon w={12} h={12} box="0 0 12 12" color="#222" sw={1.2}><path d="M.5.5l11 11M11.500.5l-11 11" /></Icon>
        </WindowButtons>
      </TitleBar>
      <MenuBar>
        {menus.map(([a, b, c]) => (
          <span key={b + c}>{a}<u>{b}</u>{c}</span>
        ))}
      </MenuBar>
      <Header>
        <Logo><b>Ultimaker</b> Cura</Logo>
        <Tabs>
          <Tab $width={131}>PREPARE</Tab>
          <Tab $width={131} $active>PREVIEW</Tab>
          <Tab $width={142}>MONITOR</Tab>
        </Tabs>
        <Account>
          <OutlineButton>Marketplace</OutlineButton>
          <GridIcon />
          <OutlineButton>Sign in</OutlineButton>
        </Account>
      </Header>

      <StageRow>
        <StageSelect $width={916}><Muted>View type</Muted>Layer view<Chevron /></StageSelect>
        <StageSelect $width={1832}><Muted>Color scheme</Muted>Line Type<Chevron /></StageSelect>
        <PrintBar>
          <SlidersIcon />
          <PrintBarText $width={258}>Draft 0.3mm - Draft - 0.3mm</PrintBarText>
          <InfillIcon />
          <PrintBarText $width={57}>20%</PrintBarText>
          <SupportIcon />
          <PrintBarText $width={48}>Off</PrintBarText>
          <AdhesionIcon />
          <PrintBarText $width={57}>Off</PrintBarText>
          <Chevron />
        </PrintBar>
      </StageRow>

      <Workspace>
        <LeftColumn>
          <Toolbar>
            {toolIcons.map((icon, i) => (
              <Tool key={i}><Icon>{icon}</Icon></Tool>
            ))}
          </Toolbar>
          <ObjectInfo>
            <InfoLine $height={35} $size={12.7} $gap={16}>
              <Icon w={16} h={8} box="-4 0 16 8" sw={1.4} color="#d4d5d6"><path d="M.6 6.600 6 1.400l5.400 5.200" /></Icon>
              Object list
            </InfoLine>
            <InfoLine $height={37} $size={13.1} $gap={16} $dim>
              <Icon w={19} h={17} box="0 0 19 17" color="#d4d5d6" sw={1.4}>
                <path d="M2 15.800h16" />
                <path d="M5 12.500l2-4L15 1.500l2 2-7.500 7.500z" fill="#d4d5d6" stroke="none" />
              </Icon>
              SP_Nexion_Nano_Holder
            </InfoLine>
            <InfoLine $height={24} $size={12.5} $dim>99.1 x 53.5 x 5.0 mm</InfoLine>
            <ViewButtons>
              {cubeIcons.map((icon, i) => (
                <Icon key={i}>{icon}</Icon>
              ))}
            </ViewButtons>
          </ObjectInfo>
        </LeftColumn>

        <CenterColumn>
          <Player>
            <Icon w={16} h={18} box="0 0 16 18" color="#fff" sw={1.5}><path d="M1 1v16l13-8z" strokeLinejoin="round" /></Icon>
            <PathTrack />
            <Knob $horizontal />
          </Player>
        </CenterColumn>

        <RightColumn>
          <RightTop>
            <Panel>
              <PanelHeader>
                Print settings
                <Icon w={10} h={10} box="0 0 10 10" color="#e0e0e0" sw={1.3}><path d="M.5.5l9 9M9.500.5l-9 9" /></Icon>
              </PanelHeader>
              <ProfileRow>
                Profile
                <ProfileSelect>
                  <span>Draft 0.3mm <em>- Draft - 0.3mm</em></span>
                  <Icon w={15} h={15} box="0 0 24 24" color="none">
                    <path d="M12 0l3.500 8 8.500.8-6.400 5.700 1.900 8.500L12 18.500 4.500 23l1.900-8.500L0 8.800 8.500 8z" fill="#8b8d8f" />
                  </Icon>
                  <Chevron color="#808385" />
                </ProfileSelect>
              </ProfileRow>
              <SearchRow>
                <SearchBox>
                  <Icon w={19} h={19} box="0 0 19 19" color="#c6c8c9" sw={1.7}>
                    <circle cx="12" cy="7" r="5.800" />
                    <path d="M8 11.200.8 18.200" />
                  </Icon>
                  Search settings
                </SearchBox>
                <Icon w={24} h={21} box="0 0 24 21" color="#c6c8c9" sw={2.6}><path d="M0 2h24M0 10.500h24M0 19h24" /></Icon>
              </SearchRow>
              <ListArea>
                <Rows>
                  <Category>
                    <Icon w={24} h={24} color="none">
                      <path d="M1 1h6v2.500H1zM1 8h14v5H1zM1 16.500h23V24H1z" fill="#9a9c9d" />
                    </Icon>
                    <CategoryName>Quality</CategoryName>
                    <Chevron color="#808385" />
                  </Category>
                  {quality.map((s) => <SettingItem key={s.label} s={s} />)}
                  <Category>
                    <Icon color="#9a9c9d">
                      <rect x="1.500" y="1.500" width="21" height="21" rx="2.500" />
                      <path d="M6.500 7h12M6.500 17.500h12" strokeDasharray="2 3" />
                      <path d="M6.500 12.300h2M16.500 12.300h2" />
                    </Icon>
                    <CategoryName>Walls</CategoryName>
                    <Chevron dir="left" color="#808385" />
                  </Category>
                  <Category>
                    <Icon color="#9a9c9d">
                      <path d="M1 3.500q0-2 2-2h18q2 0 2 2M1 20.500q0 2 2 2h18q2 0 2-2" />
                      <path d="M3.500 7.500H22M3.500 17H22" strokeDasharray="2 3" />
                    </Icon>
                    <CategoryName>Top/Bottom</CategoryName>
                    <Chevron color="#808385" />
                  </Category>
                  {topBottom.map((s) => <SettingItem key={s.label} s={s} />)}
                </Rows>
                <ScrollThumb />
              </ListArea>
              <PanelFooter>
                <RecommendedButton><Chevron dir="left" color="#fff" />Recommended</RecommendedButton>
              </PanelFooter>
              <DragBar><DragDot /><DragDot /><DragDot /></DragBar>
            </Panel>
            <LayerSlider>
              <LayerLabel>17</LayerLabel>
              <LayerPointer />
              <Knob />
              <LayerTrack />
              <Knob />
            </LayerSlider>
          </RightTop>
          <JobPanel>
            <JobLine $big>
              <Icon w={26} h={26} color="#fff"><circle cx="12" cy="12" r="10.800" /><path d="M12 5v7.500h5.500" /></Icon>
              <span>37 minutes</span>
              <Icon w={26} h={26} color="#fff"><circle cx="12" cy="12" r="10.800" /><path d="M12 10v8M12 5.500v2.200" /></Icon>
            </JobLine>
            <JobLine>
              <Icon w={26} h={26} color="#fff">
                <circle cx="12" cy="12" r="10.800" />
                <circle cx="12" cy="12" r="2.600" />
                <path d="M1.200 12v11M12 6q3 .2 4.500 2.500" />
              </Icon>
              <span>6g · 2.08m</span>
            </JobLine>
            <SaveButton>Save to Disk</SaveButton>
          </JobPanel>
        </RightColumn>
      </Workspace>
    </Window>
  );
}
